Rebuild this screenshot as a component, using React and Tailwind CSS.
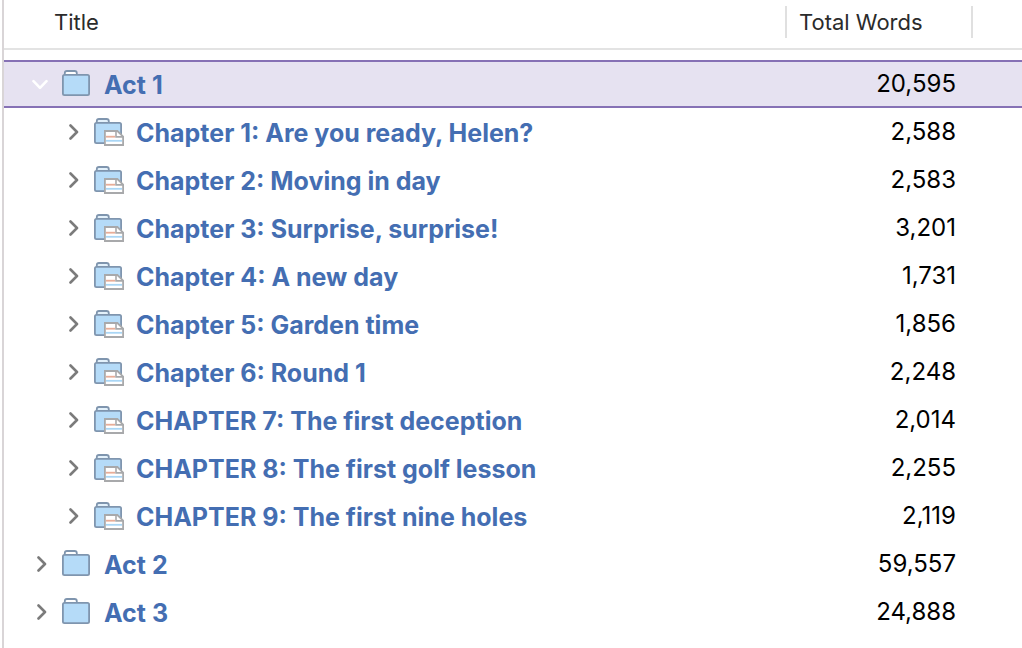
import { useState } from "react";

const acts = [
  {
    title: "Act 1",
    words: "20,595",
    chapters: [
      { title: "Chapter 1: Are you ready, Helen?", words: "2,588" },
      { title: "Chapter 2: Moving in day", words: "2,583" },
      { title: "Chapter 3: Surprise, surprise!", words: "3,201" },
      { title: "Chapter 4: A new day", words: "1,731" },
      { title: "Chapter 5: Garden time", words: "1,856" },
      { title: "Chapter 6: Round 1", words: "2,248" },
      { title: "CHAPTER 7: The first deception", words: "2,014" },
      { title: "CHAPTER 8: The first golf lesson", words: "2,255" },
      { title: "CHAPTER 9: The first nine holes", words: "2,119" },
    ],
  },
  { title: "Act 2", words: "59,557", chapters: [] },
  { title: "Act 3", words: "24,888", chapters: [] },
];

function Chevron({ open }) {
  return (
    <svg
      viewBox="0 0 16 16"
      className="h-4 w-4"
      fill="none"
      stroke="currentColor"
      strokeWidth="2.6"
      strokeLinecap="round"
      strokeLinejoin="round"
    >
      <path d={open ? "M1.5 5.2 8 11.8 14.5 5.2" : "M6.5 1.5 13 8 6.5 14.5"} />
    </svg>
  );
}

function FolderIcon({ withPage }) {
  return (
    <svg viewBox="0 0 32 28" className="h-7 w-8 shrink-0" fill="none">
      <path
        d="M2.8 5V3.2Q2.8 1 5 1H12.6Q14.8 1 14.8 3.2V5"
        fill={withPage ? "#e3f1fb" : "#fff"}
        stroke="#7f95ae"
        strokeWidth="1.8"
      />
      <rect
        x="0.9"
        y="4.9"
        width="26.2"
        height="20.2"
        rx="1.6"
        fill="#b5dbf8"
        stroke="#7f95ae"
        strokeWidth="1.8"
      />
      {withPage && (
        <>
          <path
            d="M10.9 13H23.4L29.1 18.6V27H10.9Z"
            fill="#fff"
            stroke="#a8a9ab"
            strokeWidth="1.8"
          />
          <path d="M12 18.7H21" stroke="#e8ad98" strokeWidth="1.8" />
          <path d="M12 22.8H28" stroke="#a9d6f5" strokeWidth="1.8" />
          <path d="M22 13V18.9H29" stroke="#a8a9ab" strokeWidth="1.6" />
        </>
      )}
    </svg>
  );
}

function Row({ item, nested, open, selected, onToggle }) {
  const cell = selected ? "border-y-2 border-[#8671b5] bg-[#e6e2f1]" : "";
  return (
    <tr className="h-12">
      <td className={`p-0 ${cell}`}>
        <div className={`flex items-center ${nested ? "pl-[60px]" : "pl-7"}`}>
          <button
            type="button"
            aria-label={`Toggle ${item.title}`}
            aria-expanded={open}
            onClick={onToggle}
            className={`mr-3.5 shrink-0 ${selected ? "text-white" : "text-[#7b7b7b]"}`}
          >
            <Chevron open={open} />
          </button>
          <FolderIcon withPage={nested} />
          <span className="ml-2.5 pt-0.5 text-[25px]/7 font-[650] whitespace-nowrap text-[#446eb2]">
            {item.title}
          </span>
        </div>
      </td>
      <td className={`p-0 pr-[15px] text-right text-2xl/7 text-black ${cell}`}>
        {item.words}
      </td>
      <td className={`p-0 ${cell}`}></td>
    </tr>
  );
}

export default function App() {
  const [openActs, setOpenActs] = useState({ "Act 1": true });

  const toggle = (title) =>
    setOpenActs((prev) => ({ ...prev, [title]: !prev[title] }));

  return (
    <div className="min-h-screen bg-white pl-0.5 font-['Inter',sans-serif]">
      <div className="min-h-screen border-l-2 border-[#d9d5d7]">
        <table className="w-full table-fixed border-separate border-spacing-0">
          <colgroup>
            <col />
            <col className="w-[186px]" />
            <col className="w-[51px]" />
          </colgroup>
          <thead>
            <tr className="text-left text-[22px]/8 text-[#2b2b2b]">
              <th className="border-b-2 border-[#e3e3e3] pt-1.5 pb-2.5 font-normal">
                <div className="pl-[50px]">Title</div>
              </th>
              <th className="border-b-2 border-[#e3e3e3] pt-1.5 pb-2.5 font-normal">
                <div className="border-l-2 border-[#e0e0e0] pl-3">
                  Total Words
                </div>
              </th>
              <th className="border-b-2 border-[#e3e3e3] pt-1.5 pb-2.5">
                <div className="h-8 border-l-2 border-[#e0e0e0]"></div>
              </th>
            </tr>
          </thead>
          <tbody>
            <tr className="h-2.5" aria-hidden="true">
              <td colSpan={3} className="p-0"></td>
            </tr>
            {acts.map((act) => {
              const open = !!openActs[act.title];
              return [
                <Row
                  key={act.title}
                  item={act}
                  open={open}
                  selected={act.title === "Act 1"}
                  onToggle={() => toggle(act.title)}
                />,
                ...(open ? act.chapters : []).map((chapter) => (
                  <Row
                    key={chapter.title}
                    item={chapter}
                    nested
                    open={!!openActs[chapter.title]}
                    onToggle={() => toggle(chapter.title)}
                  />
                )),
              ];
            })}
          </tbody>
        </table>
      </div>
    </div>
  );
}
